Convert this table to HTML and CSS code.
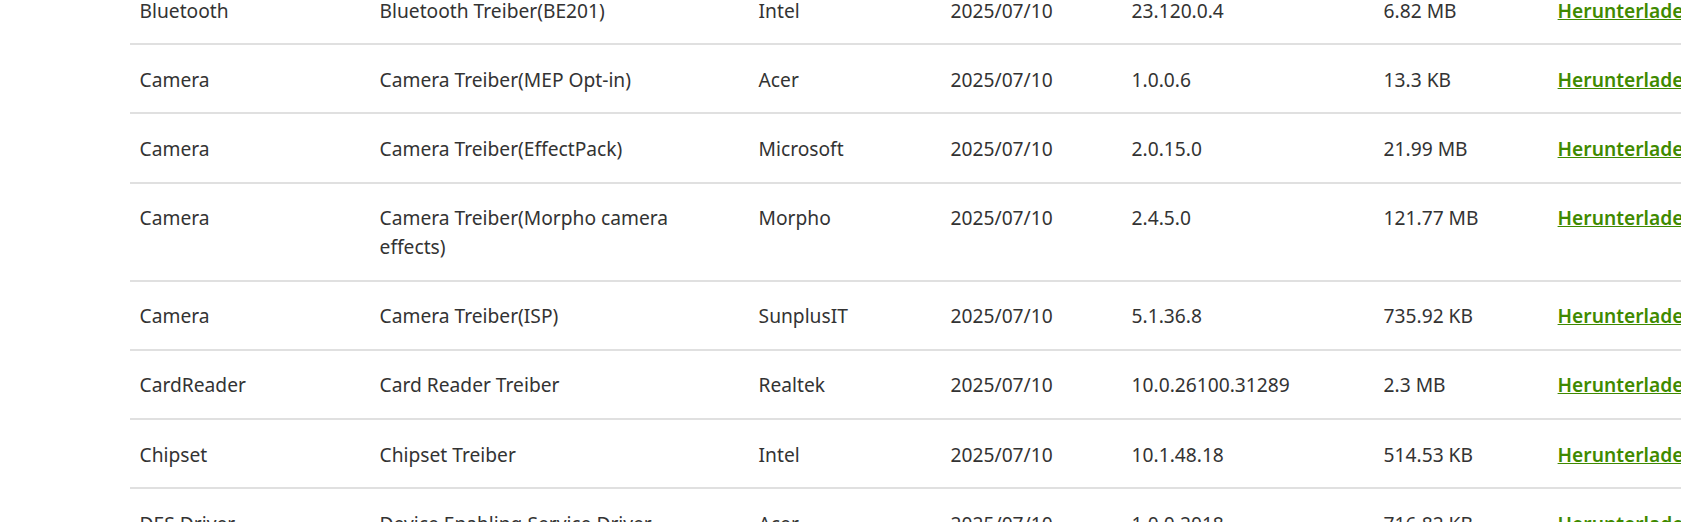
FILE: index.html
```html
<!DOCTYPE html>
<html lang="de">
<head>
<meta charset="utf-8">
<title>Treiber</title>
<link rel="stylesheet" href="styles.css">
</head>
<body>
<div class="viewport">
  <table class="drivers">
    <colgroup>
      <col class="c-cat"><col class="c-desc"><col class="c-vendor"><col class="c-date"><col class="c-ver"><col class="c-size"><col class="c-dl">
    </colgroup>
    <tbody>
      <tr><td>Bluetooth</td><td class="desc">Bluetooth Treiber(BE201)</td><td>Intel</td><td>2025/07/10</td><td>23.120.0.4</td><td>6.82 MB</td><td><a href="#" class="dl">Herunterladen</a></td></tr>
      <tr><td>Camera</td><td class="desc">Camera Treiber(MEP Opt-in)</td><td>Acer</td><td>2025/07/10</td><td>1.0.0.6</td><td>13.3 KB</td><td><a href="#" class="dl">Herunterladen</a></td></tr>
      <tr><td>Camera</td><td class="desc">Camera Treiber(EffectPack)</td><td>Microsoft</td><td>2025/07/10</td><td>2.0.15.0</td><td>21.99 MB</td><td><a href="#" class="dl">Herunterladen</a></td></tr>
      <tr><td>Camera</td><td class="desc">Camera Treiber(Morpho camera effects)</td><td>Morpho</td><td>2025/07/10</td><td>2.4.5.0</td><td>121.77 MB</td><td><a href="#" class="dl">Herunterladen</a></td></tr>
      <tr><td>Camera</td><td class="desc">Camera Treiber(ISP)</td><td>SunplusIT</td><td>2025/07/10</td><td>5.1.36.8</td><td>735.92 KB</td><td><a href="#" class="dl">Herunterladen</a></td></tr>
      <tr><td>CardReader</td><td class="desc">Card Reader Treiber</td><td>Realtek</td><td>2025/07/10</td><td>10.0.26100.31289</td><td>2.3 MB</td><td><a href="#" class="dl">Herunterladen</a></td></tr>
      <tr><td>Chipset</td><td class="desc">Chipset Treiber</td><td>Intel</td><td>2025/07/10</td><td>10.1.48.18</td><td>514.53 KB</td><td><a href="#" class="dl">Herunterladen</a></td></tr>
      <tr><td>DES Driver</td><td class="desc">Device Enabling Service Driver</td><td>Acer</td><td>2025/07/10</td><td>1.0.0.2018</td><td>716.82 KB</td><td><a href="#" class="dl">Herunterladen</a></td></tr>
    </tbody>
  </table>
</div>
</body>
</html>
```

FILE: styles.css
```css
html, body {
  margin: 0;
  padding: 0;
  background: #fff;
}
body {
  font-family: "Noto Sans", "Open Sans", "Liberation Sans", sans-serif;
  font-size: 19.2px;
  line-height: 28.8px;
  color: #333;
  overflow: hidden;
  height: 522px;
}
.viewport {
  width: 1681px;
  height: 522px;
  overflow: hidden;
  padding-left: 130px;
  box-sizing: border-box;
}
.drivers {
  margin-top: -24px;
  border-collapse: collapse;
  table-layout: fixed;
  width: 1618px;
}
.c-cat { width: 240px; }
.c-desc { width: 379px; }
.c-vendor { width: 192px; }
.c-date { width: 181px; }
.c-ver { width: 252px; }
.c-size { width: 174px; }
.c-dl { width: 200px; }
.drivers td {
  padding: 20.6px 9.6px 17.8px;
  vertical-align: top;
  border-bottom: 2px solid #e0e0e0;
  text-align: left;
}
.drivers td.desc {
  padding-right: 24px;
}
.dl {
  color: #3f8a00;
  font-weight: 600;
  text-decoration: underline;
  white-space: nowrap;
}
```
